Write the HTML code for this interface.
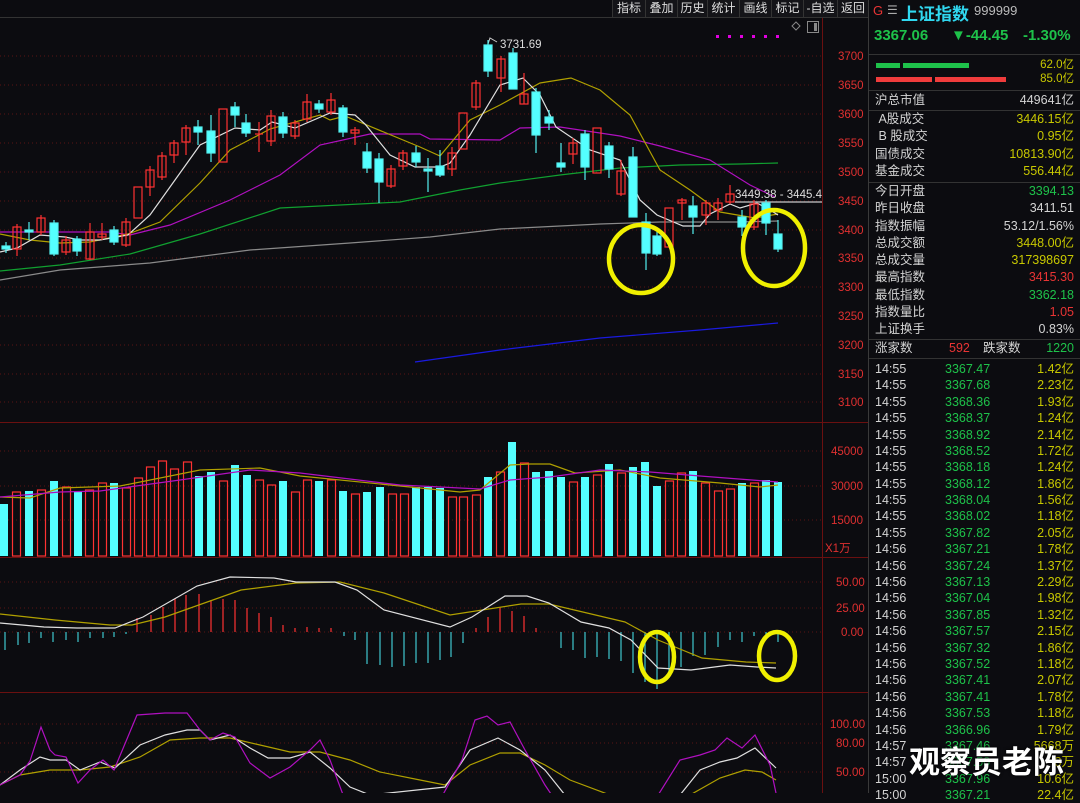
<!DOCTYPE html>
<html><head><meta charset="utf-8"><style>
*{margin:0;padding:0;box-sizing:border-box}
body{width:1080px;height:793px;background:#0c0c10;overflow:hidden;position:relative;font-family:"Liberation Sans","Noto Sans CJK SC",sans-serif}
.tb{position:absolute;top:0;height:17px;font-size:12px;color:#ddd;line-height:17px;text-align:center;border-left:1px solid #333;background:#141418}
.rp{position:absolute;left:868px;top:0;width:212px;height:793px;border-left:1px solid #3a3a3a;background:#0c0c10;font-size:12.5px}
.r{position:absolute;left:6px;right:6px;height:17px;line-height:17px;color:#d4d4d4}
.r b{font-weight:normal;position:absolute;right:0}
.g{color:#1ec24a}.y{color:#c8c800}.rd{color:#e83434}.w{color:#d4d4d4}
.hl{position:absolute;left:0;right:0;height:1px;background:#333}
.t{position:absolute;left:6px;right:6px;height:16px;line-height:16px;font-size:12.5px}
.t span{position:absolute}
</style></head><body>
<div class="tb" style="left:612px;width:33px">指标</div>
<div class="tb" style="left:645px;width:32px">叠加</div>
<div class="tb" style="left:677px;width:30px">历史</div>
<div class="tb" style="left:707px;width:32px">统计</div>
<div class="tb" style="left:739px;width:32px">画线</div>
<div class="tb" style="left:771px;width:32px">标记</div>
<div class="tb" style="left:803px;width:34px">-自选</div>
<div class="tb" style="left:837px;width:31px">返回</div>

<svg width="868" height="793" style="position:absolute;left:0;top:0" xmlns="http://www.w3.org/2000/svg">
<g stroke="#5a1414" stroke-dasharray="1,3" stroke-width="1">
<line x1="0" x2="822" y1="56" y2="56"/><line x1="0" x2="822" y1="85" y2="85"/><line x1="0" x2="822" y1="114" y2="114"/><line x1="0" x2="822" y1="143" y2="143"/><line x1="0" x2="822" y1="172" y2="172"/><line x1="0" x2="822" y1="201" y2="201"/><line x1="0" x2="822" y1="230" y2="230"/><line x1="0" x2="822" y1="258" y2="258"/><line x1="0" x2="822" y1="287" y2="287"/><line x1="0" x2="822" y1="316" y2="316"/><line x1="0" x2="822" y1="345" y2="345"/><line x1="0" x2="822" y1="374" y2="374"/><line x1="0" x2="822" y1="402" y2="402"/>
<line x1="0" x2="822" y1="451" y2="451"/><line x1="0" x2="822" y1="486" y2="486"/><line x1="0" x2="822" y1="520" y2="520"/>
<line x1="0" x2="822" y1="582" y2="582"/><line x1="0" x2="822" y1="608" y2="608"/><line x1="0" x2="822" y1="632" y2="632"/>
<line x1="0" x2="822" y1="724" y2="724"/><line x1="0" x2="822" y1="743" y2="743"/><line x1="0" x2="822" y1="772" y2="772"/>
</g>
<g stroke="#6a1010" stroke-width="1">
<line x1="822.5" x2="822.5" y1="17" y2="793"/>
<line x1="0" x2="868" y1="422.5" y2="422.5"/><line x1="0" x2="868" y1="557.5" y2="557.5"/><line x1="0" x2="868" y1="692.5" y2="692.5"/>
<line x1="0" x2="868" y1="17.5" y2="17.5" stroke="#333"/>
</g>
<g fill="#e03030" font-size="11.5" font-family="Liberation Sans">
<text x="838" y="60">3700</text><text x="838" y="89">3650</text><text x="838" y="118">3600</text><text x="838" y="147">3550</text><text x="838" y="176">3500</text><text x="838" y="205">3450</text><text x="838" y="234">3400</text><text x="838" y="262">3350</text><text x="838" y="291">3300</text><text x="838" y="320">3250</text><text x="838" y="349">3200</text><text x="838" y="378">3150</text><text x="838" y="406">3100</text>
<text x="831" y="455">45000</text><text x="831" y="490">30000</text><text x="831" y="524">15000</text><text x="825" y="552" font-family="Liberation Sans,Noto Sans CJK SC">X1万</text>
<text x="836" y="586">50.00</text><text x="836" y="612">25.00</text><text x="841" y="636">0.00</text>
<text x="830" y="728">100.00</text><text x="836" y="747">80.00</text><text x="836" y="776">50.00</text>
</g>
<g fill="#e000e0"><rect x="716" y="35" width="3" height="3"/><rect x="728" y="35" width="3" height="3"/><rect x="740" y="35" width="3" height="3"/><rect x="752" y="35" width="3" height="3"/><rect x="764" y="35" width="3" height="3"/><rect x="776" y="35" width="3" height="3"/></g>
<path d="M796 22l4 4-4 4-4-4z" fill="none" stroke="#888"/>
<rect x="807.5" y="21.5" width="11" height="11" fill="none" stroke="#888"/><rect x="814" y="23" width="3" height="8" fill="#888"/>

<!-- MA lines -->
<g fill="none" stroke-width="1.2">
<polyline stroke="#8a8a8a" points="0,280 60,270 150,263 250,250 350,243 430,237 500,229 600,224 660,222 740,222 778,221"/>
<polyline stroke="#1a1ae0" points="415,362 500,350 600,338 700,330 778,323"/>
<polyline stroke="#10a030" points="0,271 60,265 130,254 200,234 280,208 340,205 400,202 420,198 460,190 500,183 560,175 620,168 680,165 740,164 778,163"/>
<polyline stroke="#b010c0" points="0,232 50,232 110,232 130,235 170,225 230,200 280,175 320,145 370,134 420,134 430,139 500,140 520,128 560,127 620,136 660,146 710,160 750,185 775,197"/>
<polyline stroke="#b0a000" points="0,234 30,240 60,243 90,242 128,234 160,222 200,183 230,150 270,129 320,115 330,120 345,116 420,147 440,156 470,120 500,105 540,83 571,78 600,90 630,115 660,170 690,190 720,212 755,218 778,214"/>
<polyline stroke="#e0e0e0" points="0,252 17,248 40,235 65,237 80,240 100,240 128,235 150,215 175,180 200,145 235,128 260,130 272,122 295,128 330,113 355,115 365,124 390,155 415,167 440,167 450,163 470,135 500,85 523,78 540,95 556,127 590,150 620,160 640,200 657,215 683,226 700,226 710,214 730,204 740,208 757,203 770,210 778,215"/>
</g>
<line x1="735" x2="822" y1="202" y2="202" stroke="#aaa" stroke-width="1.5"/>
<text x="735" y="198" fill="#ddd" font-size="11.5">3449.38 - 3445.4</text>
<polyline points="488,44 490,38 497,42" fill="none" stroke="#ccc"/>
<text x="500" y="48" fill="#ddd" font-size="11.5">3731.69</text>

<!-- candles -->
<g stroke-width="1.2">
<g stroke="#54f0f0" fill="#54ffff">
<line x1="6" x2="6" y1="242" y2="253"/><rect x="2" y="246" width="8" height="3"/>
<line x1="29" x2="29" y1="222" y2="240"/><rect x="25" y="230" width="8" height="2"/>
<line x1="54" x2="54" y1="220" y2="256"/><rect x="50" y="223" width="8" height="31"/>
<line x1="77" x2="77" y1="236" y2="256"/><rect x="73" y="239" width="8" height="12"/>
<line x1="114" x2="114" y1="226" y2="245"/><rect x="110" y="230" width="8" height="12"/>
<line x1="198" x2="198" y1="120" y2="145"/><rect x="194" y="127" width="8" height="5"/>
<line x1="211" x2="211" y1="115" y2="162"/><rect x="207" y="131" width="8" height="22"/>
<line x1="235" x2="235" y1="102" y2="127"/><rect x="231" y="107" width="8" height="8"/>
<line x1="246" x2="246" y1="114" y2="137"/><rect x="242" y="123" width="8" height="10"/>
<line x1="283" x2="283" y1="112" y2="138"/><rect x="279" y="117" width="8" height="16"/>
<line x1="319" x2="319" y1="100" y2="113"/><rect x="315" y="104" width="8" height="5"/>
<line x1="343" x2="343" y1="105" y2="137"/><rect x="339" y="108" width="8" height="24"/>
<line x1="367" x2="367" y1="143" y2="173"/><rect x="363" y="152" width="8" height="16"/>
<line x1="379" x2="379" y1="153" y2="203"/><rect x="375" y="159" width="8" height="23"/>
<line x1="416" x2="416" y1="146" y2="167"/><rect x="412" y="153" width="8" height="9"/>
<line x1="428" x2="428" y1="158" y2="192"/><rect x="424" y="169" width="8" height="2"/>
<line x1="440" x2="440" y1="150" y2="177"/><rect x="436" y="166" width="8" height="9"/>
<line x1="488" x2="488" y1="40" y2="77"/><rect x="484" y="45" width="8" height="26"/>
<line x1="513" x2="513" y1="48" y2="89"/><rect x="509" y="53" width="8" height="36"/>
<line x1="536" x2="536" y1="88" y2="153"/><rect x="532" y="92" width="8" height="43"/>
<line x1="549" x2="549" y1="110" y2="130"/><rect x="545" y="117" width="8" height="6"/>
<line x1="561" x2="561" y1="143" y2="172"/><rect x="557" y="163" width="8" height="4"/>
<line x1="585" x2="585" y1="130" y2="180"/><rect x="581" y="134" width="8" height="33"/>
<line x1="609" x2="609" y1="142" y2="178"/><rect x="605" y="146" width="8" height="23"/>
<line x1="633" x2="633" y1="147" y2="217"/><rect x="629" y="157" width="8" height="60"/>
<line x1="646" x2="646" y1="213" y2="270"/><rect x="642" y="222" width="8" height="31"/>
<line x1="657" x2="657" y1="232" y2="256"/><rect x="653" y="236" width="8" height="18"/>
<line x1="693" x2="693" y1="196" y2="234"/><rect x="689" y="206" width="8" height="11"/>
<line x1="742" x2="742" y1="210" y2="236"/><rect x="738" y="217" width="8" height="10"/>
<line x1="766" x2="766" y1="200" y2="235"/><rect x="762" y="203" width="8" height="20"/>
<line x1="778" x2="778" y1="220" y2="252"/><rect x="774" y="234" width="8" height="15"/>
</g>
<g stroke="#ff3232" fill="none">
<line x1="17" x2="17" y1="224" y2="256"/><rect x="13" y="227" width="8" height="22"/>
<line x1="41" x2="41" y1="215" y2="235"/><rect x="37" y="218" width="8" height="14"/>
<line x1="66" x2="66" y1="236" y2="255"/><rect x="62" y="240" width="8" height="12"/>
<line x1="90" x2="90" y1="223" y2="260"/><rect x="86" y="232" width="8" height="27"/>
<line x1="102" x2="102" y1="223" y2="240"/><rect x="98" y="234" width="8" height="3"/>
<line x1="126" x2="126" y1="218" y2="247"/><rect x="122" y="222" width="8" height="23"/>
<rect x="134" y="187" width="8" height="31"/>
<line x1="150" x2="150" y1="166" y2="196"/><rect x="146" y="170" width="8" height="17"/>
<line x1="162" x2="162" y1="152" y2="180"/><rect x="158" y="156" width="8" height="21"/>
<line x1="174" x2="174" y1="140" y2="163"/><rect x="170" y="143" width="8" height="12"/>
<line x1="186" x2="186" y1="125" y2="155"/><rect x="182" y="128" width="8" height="14"/>
<rect x="219" y="109" width="8" height="53"/>
<line x1="259" x2="259" y1="122" y2="152"/><line x1="255" x2="263" y1="134" y2="134"/>
<line x1="271" x2="271" y1="110" y2="146"/><rect x="267" y="116" width="8" height="25"/>
<line x1="295" x2="295" y1="120" y2="139"/><rect x="291" y="123" width="8" height="13"/>
<line x1="307" x2="307" y1="94" y2="122"/><rect x="303" y="102" width="8" height="17"/>
<line x1="331" x2="331" y1="93" y2="115"/><rect x="327" y="100" width="8" height="12"/>
<line x1="355" x2="355" y1="127" y2="145"/><rect x="351" y="130" width="8" height="3"/>
<line x1="391" x2="391" y1="165" y2="188"/><rect x="387" y="169" width="8" height="17"/>
<line x1="403" x2="403" y1="150" y2="170"/><rect x="399" y="153" width="8" height="13"/>
<line x1="452" x2="452" y1="147" y2="176"/><rect x="448" y="153" width="8" height="16"/>
<rect x="459" y="113" width="8" height="36"/>
<line x1="476" x2="476" y1="80" y2="110"/><rect x="472" y="83" width="8" height="24"/>
<line x1="501" x2="501" y1="56" y2="92"/><rect x="497" y="59" width="8" height="19"/>
<line x1="524" x2="524" y1="73" y2="104"/><rect x="520" y="94" width="8" height="10"/>
<line x1="573" x2="573" y1="138" y2="164"/><rect x="569" y="143" width="8" height="11"/>
<rect x="593" y="128" width="8" height="45"/>
<line x1="621" x2="621" y1="160" y2="196"/><rect x="617" y="171" width="8" height="23"/>
<rect x="665" y="208" width="8" height="39"/>
<line x1="682" x2="682" y1="198" y2="220"/><rect x="678" y="200" width="8" height="3"/>
<line x1="706" x2="706" y1="200" y2="225"/><rect x="702" y="203" width="8" height="12"/>
<line x1="718" x2="718" y1="198" y2="220"/><rect x="714" y="203" width="8" height="7"/>
<line x1="730" x2="730" y1="185" y2="204"/><rect x="726" y="194" width="8" height="8"/>
<line x1="754" x2="754" y1="200" y2="230"/><rect x="750" y="204" width="8" height="23"/>
</g>
</g>
<g fill="none" stroke="#f0f000" stroke-width="4.5">
<ellipse cx="641" cy="259" rx="32" ry="34"/><ellipse cx="774" cy="248" rx="31" ry="38"/>
</g>

<!-- volume -->
<g stroke-width="1.2">
<g fill="#54ffff">
<rect x="0" y="504" width="8" height="52"/><rect x="25" y="491" width="8" height="65"/><rect x="50" y="481" width="8" height="75"/><rect x="74" y="492" width="8" height="64"/><rect x="110" y="483" width="8" height="73"/><rect x="195" y="476" width="8" height="80"/><rect x="207" y="472" width="8" height="84"/><rect x="231" y="465" width="8" height="91"/><rect x="243" y="475" width="8" height="81"/><rect x="279" y="481" width="8" height="75"/><rect x="315" y="481" width="8" height="75"/><rect x="339" y="491" width="8" height="65"/><rect x="363" y="492" width="8" height="64"/><rect x="376" y="487" width="8" height="69"/><rect x="412" y="487" width="8" height="69"/><rect x="424" y="487" width="8" height="69"/><rect x="436" y="488" width="8" height="68"/><rect x="484" y="477" width="8" height="79"/><rect x="508" y="442" width="8" height="114"/><rect x="532" y="472" width="8" height="84"/><rect x="545" y="471" width="8" height="85"/><rect x="557" y="477" width="8" height="79"/><rect x="581" y="477" width="8" height="79"/><rect x="605" y="464" width="8" height="92"/><rect x="629" y="467" width="8" height="89"/><rect x="641" y="462" width="8" height="94"/><rect x="653" y="486" width="8" height="70"/><rect x="689" y="471" width="8" height="85"/><rect x="738" y="483" width="8" height="73"/><rect x="762" y="480" width="8" height="76"/><rect x="774" y="482" width="8" height="74"/>
</g>
<g fill="none" stroke="#ff3232">
<rect x="12.5" y="492" width="8" height="64"/><rect x="37.5" y="490" width="8" height="66"/><rect x="62.5" y="487" width="8" height="69"/><rect x="85.5" y="490" width="8" height="66"/><rect x="98.5" y="483" width="8" height="73"/><rect x="122.5" y="488" width="8" height="68"/><rect x="134.5" y="478" width="8" height="78"/><rect x="146.5" y="467" width="8" height="89"/><rect x="158.5" y="461" width="8" height="95"/><rect x="170.5" y="469" width="8" height="87"/><rect x="183.5" y="462" width="8" height="94"/><rect x="219.5" y="481" width="8" height="75"/><rect x="255.5" y="480" width="8" height="76"/><rect x="267.5" y="485" width="8" height="71"/><rect x="291.5" y="492" width="8" height="64"/><rect x="303.5" y="480" width="8" height="76"/><rect x="327.5" y="480" width="8" height="76"/><rect x="351.5" y="494" width="8" height="62"/><rect x="388.5" y="494" width="8" height="62"/><rect x="400.5" y="494" width="8" height="62"/><rect x="448.5" y="497" width="8" height="59"/><rect x="459.5" y="497" width="8" height="59"/><rect x="472.5" y="495" width="8" height="61"/><rect x="496.5" y="472" width="8" height="84"/><rect x="520.5" y="463" width="8" height="93"/><rect x="569.5" y="482" width="8" height="74"/><rect x="593.5" y="475" width="8" height="81"/><rect x="617.5" y="473" width="8" height="83"/><rect x="665.5" y="481" width="8" height="75"/><rect x="677.5" y="473" width="8" height="83"/><rect x="701.5" y="483" width="8" height="73"/><rect x="714.5" y="491" width="8" height="65"/><rect x="726.5" y="489" width="8" height="67"/><rect x="750.5" y="483" width="8" height="73"/>
</g>
</g>
<g fill="none" stroke-width="1.2">
<polyline stroke="#b0a000" points="0,497 30,498 60,488 120,486 200,470 260,468 300,476 400,486 460,492 480,490 510,465 530,464 550,464 575,473 620,470 660,478 720,483 760,487 778,485"/>
<polyline stroke="#b010c0" points="0,497 60,492 100,491 180,480 250,470 300,473 400,485 480,489 510,480 550,477 600,470 650,472 700,476 778,482"/>
</g>

<!-- MACD -->
<g stroke-width="1.2">
<g stroke="#ff3232">
<line x1="137" x2="137" y1="632" y2="618"/><line x1="151" x2="151" y1="632" y2="615"/><line x1="163" x2="163" y1="632" y2="607"/><line x1="175" x2="175" y1="632" y2="599"/><line x1="186" x2="186" y1="632" y2="595"/><line x1="199" x2="199" y1="632" y2="594"/><line x1="211" x2="211" y1="632" y2="600"/><line x1="223" x2="223" y1="632" y2="599"/><line x1="235" x2="235" y1="632" y2="600"/><line x1="247" x2="247" y1="632" y2="608"/><line x1="259" x2="259" y1="632" y2="613"/><line x1="271" x2="271" y1="632" y2="617"/><line x1="283" x2="283" y1="632" y2="625"/><line x1="295" x2="295" y1="632" y2="628"/><line x1="307" x2="307" y1="632" y2="627"/><line x1="319" x2="319" y1="632" y2="628"/><line x1="331" x2="331" y1="632" y2="628"/>
<line x1="476" x2="476" y1="632" y2="628"/><line x1="488" x2="488" y1="632" y2="617"/><line x1="500" x2="500" y1="632" y2="608"/><line x1="512" x2="512" y1="632" y2="611"/><line x1="524" x2="524" y1="632" y2="616"/><line x1="536" x2="536" y1="632" y2="628"/>
</g>
<g stroke="#40c8d0">
<line x1="5" x2="5" y1="632" y2="650"/><line x1="18" x2="18" y1="632" y2="645"/><line x1="29" x2="29" y1="632" y2="643"/><line x1="41" x2="41" y1="632" y2="638"/><line x1="53" x2="53" y1="632" y2="642"/><line x1="66" x2="66" y1="632" y2="640"/><line x1="78" x2="78" y1="632" y2="642"/><line x1="90" x2="90" y1="632" y2="638"/><line x1="103" x2="103" y1="632" y2="638"/><line x1="114" x2="114" y1="632" y2="637"/><line x1="126" x2="126" y1="632" y2="634"/>
<line x1="344" x2="344" y1="632" y2="636"/><line x1="355" x2="355" y1="632" y2="640"/><line x1="367" x2="367" y1="632" y2="664"/><line x1="380" x2="380" y1="632" y2="665"/><line x1="392" x2="392" y1="632" y2="667"/><line x1="404" x2="404" y1="632" y2="666"/><line x1="416" x2="416" y1="632" y2="663"/><line x1="428" x2="428" y1="632" y2="663"/><line x1="440" x2="440" y1="632" y2="660"/><line x1="451" x2="451" y1="632" y2="657"/><line x1="463" x2="463" y1="632" y2="643"/>
<line x1="561" x2="561" y1="632" y2="648"/><line x1="573" x2="573" y1="632" y2="650"/><line x1="585" x2="585" y1="632" y2="658"/><line x1="597" x2="597" y1="632" y2="657"/><line x1="609" x2="609" y1="632" y2="659"/><line x1="621" x2="621" y1="632" y2="661"/><line x1="633" x2="633" y1="632" y2="673"/><line x1="645" x2="645" y1="632" y2="682"/><line x1="657" x2="657" y1="632" y2="689"/><line x1="669" x2="669" y1="632" y2="678"/><line x1="681" x2="681" y1="632" y2="667"/><line x1="693" x2="693" y1="632" y2="656"/><line x1="705" x2="705" y1="632" y2="655"/><line x1="718" x2="718" y1="632" y2="647"/><line x1="730" x2="730" y1="632" y2="640"/><line x1="742" x2="742" y1="632" y2="642"/><line x1="754" x2="754" y1="632" y2="636"/><line x1="766" x2="766" y1="632" y2="635"/><line x1="778" x2="778" y1="632" y2="642"/>
</g>
</g>
<g fill="none" stroke-width="1.2">
<polyline stroke="#b0a000" points="0,614 55,620 110,625 132,625 165,617 241,590 296,583 340,582 384,593 450,615 521,604 549,604 625,622 658,640 702,658 746,662 776,663"/>
<polyline stroke="#e0e0e0" points="0,623 44,627 77,628 115,628 143,617 197,586 230,577 274,578 296,582 335,582 357,590 384,610 450,627 472,617 505,596 527,596 549,603 581,622 609,628 631,640 658,668 691,670 730,665 757,667 776,668"/>
</g>
<g fill="none" stroke="#f0f000" stroke-width="4.5">
<ellipse cx="657" cy="657" rx="17" ry="25"/><ellipse cx="777" cy="656" rx="18" ry="24"/>
</g>

<!-- KDJ -->
<g fill="none" stroke-width="1.2">
<polyline stroke="#b0a000" points="0,785 20,775 50,770 80,770 110,767 140,757 170,740 200,738 230,738 260,745 290,752 320,752 350,760 380,772 420,780 445,785 470,765 500,753 520,753 545,765 570,780 610,795 690,795 720,778 745,770 762,772 776,780"/>
<polyline stroke="#e0e0e0" points="0,785 20,770 40,757 50,760 66,760 80,770 100,762 115,768 140,745 165,735 187,730 200,730 210,740 230,735 250,748 268,758 290,758 310,752 330,768 350,787 370,795 445,787 470,750 498,738 520,750 545,770 565,795 680,795 700,770 720,762 737,758 755,748 776,768"/>
<polyline stroke="#b010c0" points="0,785 20,775 30,761 41,727 50,750 55,755 66,757 78,783 90,770 103,760 114,770 137,715 165,713 187,713 200,730 210,740 223,733 235,737 250,763 270,778 290,767 310,750 320,740 330,760 345,800 440,800 462,760 475,720 487,716 498,725 510,722 525,750 545,785 555,800 655,800 680,760 700,755 715,750 727,738 742,748 755,735 770,765 776,793"/>
</g>
</svg>

<div class="rp">
<div style="position:absolute;left:4px;top:3px;font-size:13px;color:#e83434">G</div>
<div style="position:absolute;left:18px;top:3px;font-size:12px;color:#aaa">☰</div>
<div style="position:absolute;left:32px;top:0px;font-size:17px;font-weight:bold;color:#30d8f0">上证指数</div>
<div style="position:absolute;left:105px;top:3px;font-size:13px;color:#bbb">999999</div>
<div style="position:absolute;left:5px;top:27px;font-size:15px;font-weight:bold" class="g">3367.06</div>
<div style="position:absolute;left:82px;top:27px;font-size:15px;font-weight:bold" class="g">▼-44.45</div>
<div style="position:absolute;left:154px;top:27px;font-size:15px;font-weight:bold" class="g">-1.30%</div>
<div class="hl" style="top:54px"></div>
<div style="position:absolute;left:7px;top:63px;width:24px;height:5px;background:#1ec24a"></div>
<div style="position:absolute;left:34px;top:63px;width:66px;height:5px;background:#1ec24a"></div>
<div style="position:absolute;left:7px;top:77px;width:56px;height:5px;background:#f03c3c"></div>
<div style="position:absolute;left:66px;top:77px;width:71px;height:5px;background:#f03c3c"></div>
<div class="r y" style="top:57px;font-size:11.5px"><b>62.0亿</b></div>
<div class="r y" style="top:71px;font-size:11.5px"><b>85.0亿</b></div>
<div class="hl" style="top:90px"></div>
<div class="r" style="top:92px">沪总市值<b class="w">449641亿</b></div>
<div class="hl" style="top:110px"></div>
<div class="r" style="top:111px">&nbsp;A股成交<b class="y">3446.15亿</b></div>
<div class="r" style="top:128px">&nbsp;B 股成交<b class="y">0.95亿</b></div>
<div class="r" style="top:146px">国债成交<b class="y">10813.90亿</b></div>
<div class="r" style="top:163px">基金成交<b class="y">556.44亿</b></div>
<div class="hl" style="top:182px"></div>
<div class="r" style="top:183px">今日开盘<b class="g">3394.13</b></div>
<div class="r" style="top:200px">昨日收盘<b class="w">3411.51</b></div>
<div class="r" style="top:218px">指数振幅<b class="w">53.12/1.56%</b></div>
<div class="r" style="top:235px">总成交额<b class="y">3448.00亿</b></div>
<div class="r" style="top:252px">总成交量<b class="y">317398697</b></div>
<div class="r" style="top:269px">最高指数<b class="rd">3415.30</b></div>
<div class="r" style="top:287px">最低指数<b class="g">3362.18</b></div>
<div class="r" style="top:304px">指数量比<b class="rd">1.05</b></div>
<div class="r" style="top:321px">上证换手<b class="w">0.83%</b></div>
<div class="hl" style="top:339px"></div>
<div class="r" style="top:340px">涨家数<span class="rd" style="position:absolute;left:74px">592</span><span style="position:absolute;left:108px">跌家数</span><b class="g">1220</b></div>
<div class="hl" style="top:358px"></div>
<div id="ticks">
<div class="t" style="top:361px"><span class="w">14:55</span><span class="g" style="left:70px">3367.47</span><b class="y" style="position:absolute;right:0;font-weight:normal">1.42亿</b></div>
<div class="t" style="top:377px"><span class="w">14:55</span><span class="g" style="left:70px">3367.68</span><b class="y" style="position:absolute;right:0;font-weight:normal">2.23亿</b></div>
<div class="t" style="top:394px"><span class="w">14:55</span><span class="g" style="left:70px">3368.36</span><b class="y" style="position:absolute;right:0;font-weight:normal">1.93亿</b></div>
<div class="t" style="top:410px"><span class="w">14:55</span><span class="g" style="left:70px">3368.37</span><b class="y" style="position:absolute;right:0;font-weight:normal">1.24亿</b></div>
<div class="t" style="top:427px"><span class="w">14:55</span><span class="g" style="left:70px">3368.92</span><b class="y" style="position:absolute;right:0;font-weight:normal">2.14亿</b></div>
<div class="t" style="top:443px"><span class="w">14:55</span><span class="g" style="left:70px">3368.52</span><b class="y" style="position:absolute;right:0;font-weight:normal">1.72亿</b></div>
<div class="t" style="top:459px"><span class="w">14:55</span><span class="g" style="left:70px">3368.18</span><b class="y" style="position:absolute;right:0;font-weight:normal">1.24亿</b></div>
<div class="t" style="top:476px"><span class="w">14:55</span><span class="g" style="left:70px">3368.12</span><b class="y" style="position:absolute;right:0;font-weight:normal">1.86亿</b></div>
<div class="t" style="top:492px"><span class="w">14:55</span><span class="g" style="left:70px">3368.04</span><b class="y" style="position:absolute;right:0;font-weight:normal">1.56亿</b></div>
<div class="t" style="top:508px"><span class="w">14:55</span><span class="g" style="left:70px">3368.02</span><b class="y" style="position:absolute;right:0;font-weight:normal">1.18亿</b></div>
<div class="t" style="top:525px"><span class="w">14:55</span><span class="g" style="left:70px">3367.82</span><b class="y" style="position:absolute;right:0;font-weight:normal">2.05亿</b></div>
<div class="t" style="top:541px"><span class="w">14:56</span><span class="g" style="left:70px">3367.21</span><b class="y" style="position:absolute;right:0;font-weight:normal">1.78亿</b></div>
<div class="t" style="top:558px"><span class="w">14:56</span><span class="g" style="left:70px">3367.24</span><b class="y" style="position:absolute;right:0;font-weight:normal">1.37亿</b></div>
<div class="t" style="top:574px"><span class="w">14:56</span><span class="g" style="left:70px">3367.13</span><b class="y" style="position:absolute;right:0;font-weight:normal">2.29亿</b></div>
<div class="t" style="top:590px"><span class="w">14:56</span><span class="g" style="left:70px">3367.04</span><b class="y" style="position:absolute;right:0;font-weight:normal">1.98亿</b></div>
<div class="t" style="top:607px"><span class="w">14:56</span><span class="g" style="left:70px">3367.85</span><b class="y" style="position:absolute;right:0;font-weight:normal">1.32亿</b></div>
<div class="t" style="top:623px"><span class="w">14:56</span><span class="g" style="left:70px">3367.57</span><b class="y" style="position:absolute;right:0;font-weight:normal">2.15亿</b></div>
<div class="t" style="top:640px"><span class="w">14:56</span><span class="g" style="left:70px">3367.32</span><b class="y" style="position:absolute;right:0;font-weight:normal">1.86亿</b></div>
<div class="t" style="top:656px"><span class="w">14:56</span><span class="g" style="left:70px">3367.52</span><b class="y" style="position:absolute;right:0;font-weight:normal">1.18亿</b></div>
<div class="t" style="top:672px"><span class="w">14:56</span><span class="g" style="left:70px">3367.41</span><b class="y" style="position:absolute;right:0;font-weight:normal">2.07亿</b></div>
<div class="t" style="top:689px"><span class="w">14:56</span><span class="g" style="left:70px">3367.41</span><b class="y" style="position:absolute;right:0;font-weight:normal">1.78亿</b></div>
<div class="t" style="top:705px"><span class="w">14:56</span><span class="g" style="left:70px">3367.53</span><b class="y" style="position:absolute;right:0;font-weight:normal">1.18亿</b></div>
<div class="t" style="top:722px"><span class="w">14:56</span><span class="g" style="left:70px">3366.96</span><b class="y" style="position:absolute;right:0;font-weight:normal">1.79亿</b></div>
<div class="t" style="top:738px"><span class="w">14:57</span><span class="g" style="left:70px">3367.46</span><b class="y" style="position:absolute;right:0;font-weight:normal">5668万</b></div>
<div class="t" style="top:754px"><span class="w">14:57</span><span class="g" style="left:70px">3367.50</span><b class="y" style="position:absolute;right:0;font-weight:normal">8万</b></div>
<div class="t" style="top:771px"><span class="w">15:00</span><span class="g" style="left:70px">3367.96</span><b class="y" style="position:absolute;right:0;font-weight:normal">10.6亿</b></div>
<div class="t" style="top:787px"><span class="w">15:00</span><span class="g" style="left:70px">3367.21</span><b class="y" style="position:absolute;right:0;font-weight:normal">22.4亿</b></div>
</div>
<div style="position:absolute;left:40px;top:737px;font-size:31px;font-weight:bold;color:#fff;letter-spacing:0px;text-shadow:0 0 3px #000">观察员老陈</div>
</div>
</body></html>
